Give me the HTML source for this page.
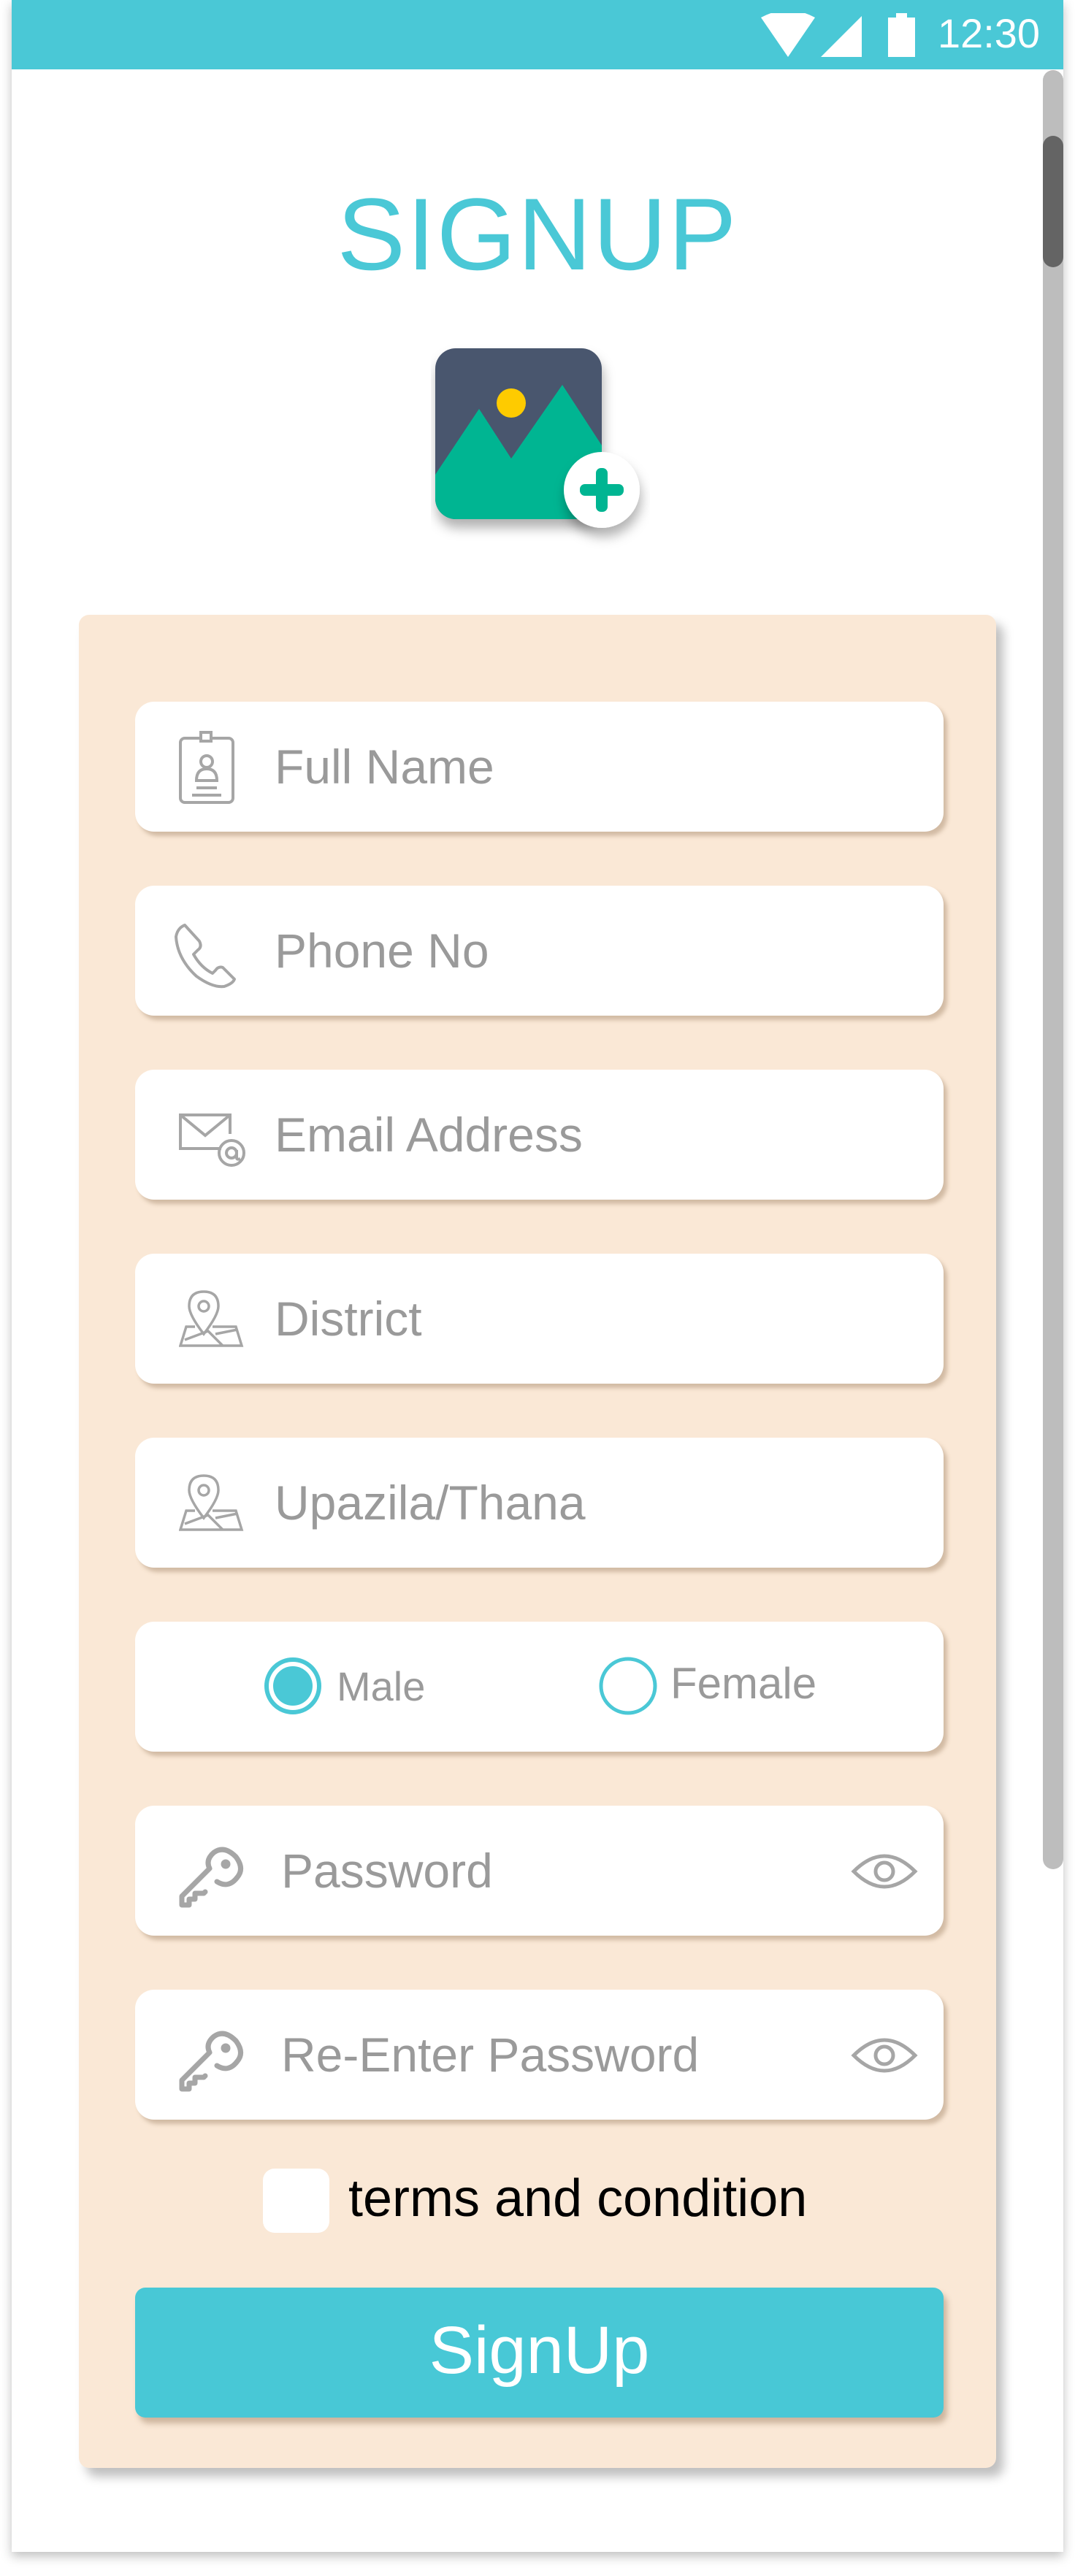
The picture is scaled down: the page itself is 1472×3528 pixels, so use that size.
<!DOCTYPE html>
<html><head><meta charset="utf-8"><style>
*{margin:0;padding:0;box-sizing:border-box}
body{width:1472px;height:3528px;background:#fff;position:relative;overflow:hidden;font-family:"Liberation Sans",sans-serif}
.frame{position:absolute;left:16px;top:0;width:1440px;height:3495px;background:#fff;box-shadow:0 6px 14px rgba(0,0,0,.25)}
.status{position:absolute;left:16px;top:0;width:1440px;height:95px;background:#4ac8d6}
.track{position:absolute;left:1428px;top:96px;width:28px;height:2464px;background:#bdbdbd;border-radius:14px}
.thumb{position:absolute;left:1428px;top:186px;width:28px;height:180px;background:#646464;border-radius:14px}
.title{position:absolute;left:0;width:1472px;top:246px;text-align:center;font-size:140px;color:#4ac8d6;letter-spacing:2px;line-height:150px;font-weight:normal}
.card{position:absolute;left:108px;top:842px;width:1256px;height:2538px;background:#fae8d6;border-radius:14px;box-shadow:10px 12px 14px rgba(0,0,0,.25)}
.inp{position:absolute;left:185px;width:1107px;height:178px;background:#fff;border-radius:26px;box-shadow:5px 6px 6px rgba(150,120,90,.4)}
.inp .t{position:absolute;left:191px;top:0;line-height:178px;font-size:66px;color:#9a9a9a}
.inp svg{position:absolute}
.btn{position:absolute;left:185px;top:3133px;width:1107px;height:178px;background:#48c8d6;border-radius:14px;box-shadow:5px 8px 8px rgba(150,120,90,.45);color:#fff;text-align:center;line-height:172px;font-size:92px}
</style></head><body>
<div class="frame"></div>
<div class="status">
<svg style="position:absolute;left:1020px;top:18px" width="420" height="70" viewBox="0 0 420 70">
<path d="M6 6 Q43 -14 80 6 L43 60 Z" fill="#fff"/>
<path d="M88 60 L144 4 L144 60 Z" fill="#fff"/>
<rect x="180" y="6" width="37" height="54" fill="#fff"/><rect x="191" y="0" width="15" height="8" fill="#fff"/>
<text x="248" y="47" font-size="56" fill="#fff" font-family="Liberation Sans" textLength="140" lengthAdjust="spacingAndGlyphs">12:30</text>
</svg>
</div>
<div class="track"></div><div class="thumb"></div>
<div class="title">SIGNUP</div>
<svg style="position:absolute;left:590px;top:470px" width="300" height="300" viewBox="0 0 300 300">
<defs><filter id="sh" x="-30%" y="-30%" width="160%" height="160%"><feDropShadow dx="2" dy="12" stdDeviation="8" flood-opacity=".3"/></filter><clipPath id="c"><rect x="6" y="7" width="228" height="234" rx="28"/></clipPath></defs>
<g filter="url(#sh)"><g clip-path="url(#c)">
<rect x="6" y="7" width="228" height="234" fill="#4a566e"/>
<path d="M6 180 L66 90 L110 158 L180 57 L234 140 L234 241 L6 241Z" fill="#00b592"/>
</g></g>
<circle cx="110" cy="82" r="20" fill="#fecb00"/>
<circle cx="234" cy="201" r="52" fill="#fff" filter="url(#sh)"/>
<rect x="226" y="171" width="16" height="60" rx="7" fill="#00b592"/>
<rect x="204" y="193" width="60" height="16" rx="7" fill="#00b592"/>
</svg>
<div class="card"></div>

<div class="inp" style="top:961px">
<svg style="left:58px;top:40px" width="80" height="100" viewBox="0 0 80 100" fill="none" stroke="#a6a6a6" stroke-width="4">
<rect x="4" y="10" width="72" height="88" rx="6"/><rect x="32" y="2" width="14" height="12" fill="#fff"/>
<circle cx="40" cy="42" r="8"/><path d="M26 68 Q26 52 40 52 Q54 52 54 68 Z"/><path d="M26 78 H54 M20 88 H60"/>
</svg>
<div class="t">Full Name</div></div>

<div class="inp" style="top:1213px">
<svg style="left:50px;top:48px" width="96" height="96" viewBox="0 0 96 96" fill="none" stroke="#a6a6a6" stroke-width="4" stroke-linejoin="round">
<path d="M18 6 Q8 10 6 22 Q8 52 34 76 Q56 92 72 90 Q84 86 86 80 L70 64 Q64 62 60 68 L56 72 Q40 64 30 46 L36 40 Q42 36 38 28 Z"/>
</svg>
<div class="t">Phone No</div></div>

<div class="inp" style="top:1465px">
<svg style="left:58px;top:58px" width="96" height="80" viewBox="0 0 96 80" fill="none" stroke="#a6a6a6" stroke-width="4">
<path d="M60 50 H4 V4 H72 V30"/><path d="M4 4 L38 32 L72 4"/>
<circle cx="74" cy="56" r="17"/><circle cx="74" cy="56" r="7"/><path d="M81 52 V62 Q81 66 86 64"/>
</svg>
<div class="t">Email Address</div></div>

<div class="inp" style="top:1717px">
<svg style="left:60px;top:48px" width="90" height="90" viewBox="0 0 90 90" fill="none" stroke="#a6a6a6" stroke-width="3.5">
<path d="M34 62 Q14 36 14 24 Q14 4 34 4 Q54 4 54 24 Q54 36 34 62Z"/><circle cx="34" cy="24" r="7"/>
<path d="M22 52 H10 L2 78 H86 L78 52 H46 M8 70 L40 58 L60 78 M50 62 L80 56"/>
</svg>
<div class="t">District</div></div>

<div class="inp" style="top:1969px">
<svg style="left:60px;top:48px" width="90" height="90" viewBox="0 0 90 90" fill="none" stroke="#a6a6a6" stroke-width="3.5">
<path d="M34 62 Q14 36 14 24 Q14 4 34 4 Q54 4 54 24 Q54 36 34 62Z"/><circle cx="34" cy="24" r="7"/>
<path d="M22 52 H10 L2 78 H86 L78 52 H46 M8 70 L40 58 L60 78 M50 62 L80 56"/>
</svg>
<div class="t">Upazila/Thana</div></div>

<div class="inp" style="top:2221px">
<svg style="left:172px;top:42px" width="100" height="96" viewBox="0 0 100 96"><circle cx="44" cy="46" r="36" fill="none" stroke="#4ac8d6" stroke-width="6"/><circle cx="44" cy="46" r="27" fill="#4ac8d6"/></svg>
<div class="t" style="left:276px;font-size:56px">Male</div>
<svg style="left:631px;top:42px" width="100" height="96" viewBox="0 0 100 96"><circle cx="44" cy="46" r="37" fill="none" stroke="#4ac8d6" stroke-width="5"/></svg>
<div class="t" style="left:733px;font-size:60px;top:-4px">Female</div>
</div>

<div class="inp" style="top:2473px">
<svg style="left:58px;top:46px" width="96" height="96" viewBox="0 0 96 96" fill="none" stroke="#a6a6a6" stroke-width="7" stroke-linejoin="round" stroke-linecap="round">
<path d="M54 58 Q70 68 82 52 Q92 40 80 24 Q64 8 50 18 Q38 28 44 40 L6 78 V90 H16 V82 H24 V74 H36 L38 72"/><circle cx="66" cy="34" r="3" fill="#a6a6a6"/>
</svg>
<div class="t" style="left:200px">Password</div>
<svg style="left:980px;top:62px" width="92" height="56" viewBox="0 0 92 56" fill="none" stroke="#a6a6a6" stroke-width="5"><path d="M4 28 Q46 -14 88 28 Q46 70 4 28Z"/><circle cx="46" cy="28" r="12"/></svg>
</div>

<div class="inp" style="top:2725px">
<svg style="left:58px;top:46px" width="96" height="96" viewBox="0 0 96 96" fill="none" stroke="#a6a6a6" stroke-width="7" stroke-linejoin="round" stroke-linecap="round">
<path d="M54 58 Q70 68 82 52 Q92 40 80 24 Q64 8 50 18 Q38 28 44 40 L6 78 V90 H16 V82 H24 V74 H36 L38 72"/><circle cx="66" cy="34" r="3" fill="#a6a6a6"/>
</svg>
<div class="t" style="left:200px">Re-Enter Password</div>
<svg style="left:980px;top:62px" width="92" height="56" viewBox="0 0 92 56" fill="none" stroke="#a6a6a6" stroke-width="5"><path d="M4 28 Q46 -14 88 28 Q46 70 4 28Z"/><circle cx="46" cy="28" r="12"/></svg>
</div>

<div style="position:absolute;left:360px;top:2970px;width:91px;height:88px;background:#fff;border-radius:16px"></div>
<div style="position:absolute;left:477px;top:2966px;font-size:72px;line-height:90px;color:#000">terms and condition</div>
<div class="btn">SignUp</div>
</body></html>
